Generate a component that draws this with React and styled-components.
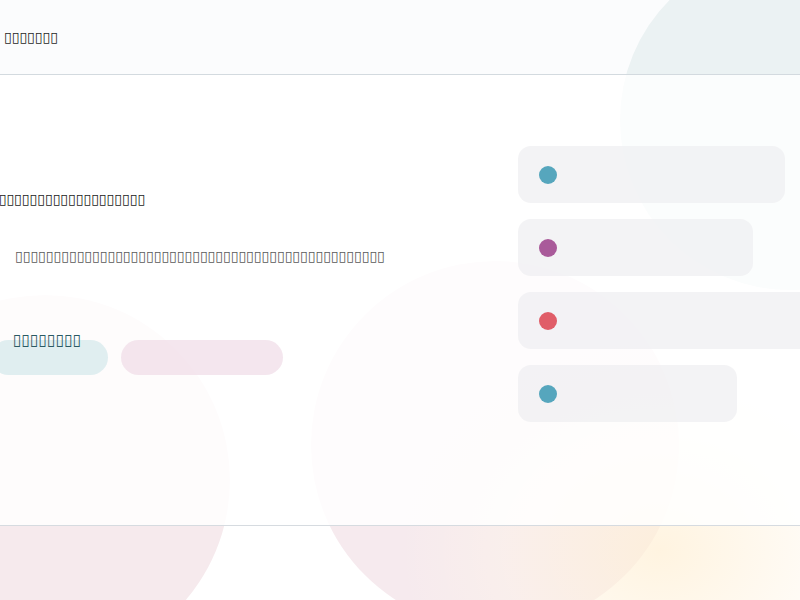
import React from "react";
import styled, { createGlobalStyle } from "styled-components";

const GlobalStyle = createGlobalStyle`
  html, body {
    margin: 0;
    padding: 0;
    background: #ffffff;
  }
  body {
    font-family: "DejaVu Sans", "Noto Sans", sans-serif;
    overflow: hidden;
  }
`;

const Page = styled.div`
  position: relative;
  width: 800px;
  height: 600px;
  overflow: hidden;
  display: flex;
  flex-direction: column;
`;

const Blob = styled.div`
  position: absolute;
  border-radius: 50%;
  left: ${(p) => p.x - p.r}px;
  top: ${(p) => p.y - p.r}px;
  width: ${(p) => p.r * 2}px;
  height: ${(p) => p.r * 2}px;
  background: ${(p) => p.color};
  z-index: 0;
`;

const Glow = styled.div`
  position: absolute;
  right: -120px;
  bottom: -160px;
  width: 520px;
  height: 420px;
  border-radius: 50%;
  background: radial-gradient(closest-side, rgba(255, 240, 214, 0.75), rgba(255, 246, 232, 0.4) 60%, rgba(255, 255, 255, 0));
  z-index: 0;
`;

const Header = styled.header`
  position: relative;
  z-index: 1;
  height: 74px;
  display: flex;
  align-items: center;
  padding: 0 4px;
  background: rgba(244, 248, 250, 0.4);
  border-bottom: 1px solid #d3dadf;
`;

const Title = styled.h1`
  margin: 0;
  font-size: 14px;
  font-weight: 400;
  color: #1f1f1f;
`;

const Main = styled.main`
  position: relative;
  z-index: 1;
  height: 450px;
  display: grid;
  grid-template-columns: 518px 1fr;
  background: rgba(255, 255, 255, 0.84);
  border-bottom: 1px solid #d6dbe0;
`;

const Intro = styled.section`
  display: flex;
  flex-direction: column;
  padding-top: 115px;
  margin-left: -9px;
`;

const Heading = styled.h2`
  margin: 0;
  font-size: 14px;
  line-height: 18px;
  font-weight: 400;
  color: #1b1b1b;
  white-space: nowrap;
`;

const Lead = styled.p`
  margin: 39px 0 0 24px;
  font-size: 14px;
  line-height: 18px;
  color: #5a5a5a;
  white-space: nowrap;
`;

const Actions = styled.div`
  display: flex;
  gap: 13px;
  margin-top: 75px;
`;

const Button = styled.a`
  display: flex;
  align-items: flex-start;
  height: 35px;
  width: ${(p) => p.w}px;
  padding: 0 22px;
  box-sizing: border-box;
  border-radius: 18px;
  background: ${(p) => p.bg};
  color: #2b5a63;
  font-size: 15.5px;
  line-height: 1;
`;

const Label = styled.span`
  margin-top: -7px;
`;

const Features = styled.ul`
  list-style: none;
  margin: 0;
  padding: 71px 0 0;
  display: flex;
  flex-direction: column;
  gap: 16px;
`;

const Feature = styled.li`
  display: flex;
  align-items: center;
  height: 57px;
  width: ${(p) => p.w}px;
  padding-left: 21px;
  box-sizing: border-box;
  border-radius: 13px;
  background: rgba(238, 239, 241, 0.72);
`;

const Dot = styled.span`
  width: 18px;
  height: 18px;
  border-radius: 50%;
  background: ${(p) => p.color};
`;

const Footer = styled.footer`
  position: relative;
  z-index: 1;
  flex: 1;
`;

const features = [
  { w: 267, color: "#56a6bd" },
  { w: 235, color: "#a95a9a" },
  { w: 300, color: "#e05d68" },
  { w: 219, color: "#56a6bd" },
];

const boxes = (n) => "▯".repeat(n);

export default function App() {
  return (
    <>
      <GlobalStyle />
      <Page>
        <Blob x={790} y={120} r={170} color="#e5eeee" />
        <Blob x={45} y={480} r={185} color="#f6eaed" />
        <Blob x={495} y={445} r={184} color="#f6eaee" />
        <Glow />
        <Header>
          <Title>{boxes(7)}</Title>
        </Header>
        <Main>
          <Intro>
            <Heading>{boxes(20)}</Heading>
            <Lead>{boxes(48)}</Lead>
            <Actions>
              <Button w={117} bg="rgba(214, 234, 236, 0.75)">
                <Label>{boxes(8)}</Label>
              </Button>
              <Button w={162} bg="rgba(240, 222, 232, 0.75)" />
            </Actions>
          </Intro>
          <Features>
            {features.map((f, i) => (
              <Feature key={i} w={f.w}>
                <Dot color={f.color} />
              </Feature>
            ))}
          </Features>
        </Main>
        <Footer />
      </Page>
    </>
  );
}
